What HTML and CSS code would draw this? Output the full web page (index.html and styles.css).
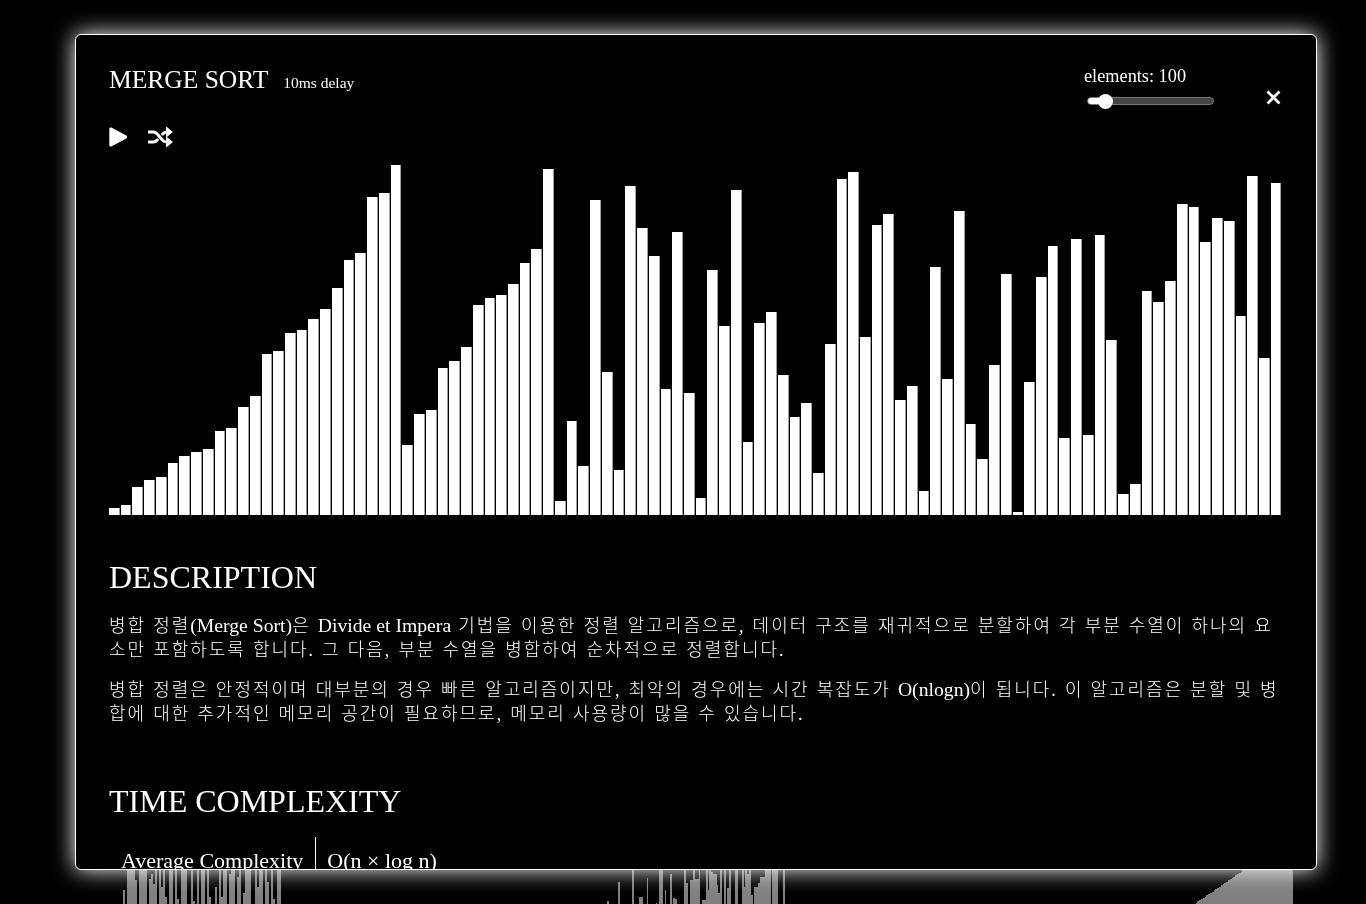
FILE: index.html
```html
<!DOCTYPE html>
<html lang="ko">
<head>
    <meta charset="UTF-8">
    <meta name="viewport" content="width=device-width, initial-scale=1.0">
    <title>Merge Sort</title>
    <link rel="stylesheet" href="styles.css">
</head>

<body>
    <div class="gallery">
        <div class="thumb" id="thumb_bubble"></div>
        <div class="thumb" id="thumb_quick"></div>
        <div class="thumb" id="thumb_sorted"></div>
    </div>

    <div class="modal">
        <div class="modal_head">
            <div class="title_block">
                <h1 class="title">MERGE SORT</h1>
                <span class="delay">10ms delay</span>
            </div>
            <div class="head_right">
                <div class="elements">
                    <label class="elements_label" for="elements_range">elements: 100</label>
                    <input class="elements_range" id="elements_range" type="range" min="10" max="1000" value="100">
                </div>
                <button class="icon_btn close_btn" aria-label="close">
                    <svg width="15" height="15" viewBox="0 0 15 15"><path d="M1.5 1.5 13.5 13.5M13.5 1.5 1.5 13.5" fill="none" stroke="#fff" stroke-width="2.8"/></svg>
                </button>
            </div>
        </div>

        <div class="controls">
            <button class="icon_btn" aria-label="play">
                <svg width="19" height="22" viewBox="0 0 19 22"><path d="M2 2.2 17 10.2Q18 11 17 11.8L2 19.8Q1 20.2 1 19V3Q1 1.8 2 2.2Z" fill="#fff" stroke="#fff" stroke-width="1.4" stroke-linejoin="round"/></svg>
            </button>
            <button class="icon_btn" aria-label="shuffle">
                <svg width="25" height="22" viewBox="0 0 25 22"><path d="M1 6H5.5C7.5 6 8.5 7 9.7 8.4L14.3 14C15.5 15.3 16.5 16 18.5 16H20M1 16H5.5C7.2 16 8.2 15.3 9.3 14M14.7 8C15.8 6.7 16.8 6 18.5 6H20" fill="none" stroke="#fff" stroke-width="3" stroke-linecap="round"/><path d="M18.5 1.2 24.3 6 18.5 10.8ZM18.5 11.2 24.3 16 18.5 20.8Z" fill="#fff" stroke="#fff" stroke-linejoin="round"/></svg>
            </button>
        </div>

        <div class="chart" id="chart"></div>

        <h2 class="section_title description_title">DESCRIPTION</h2>
        <p class="text">병합 정렬<span class="latin">(Merge Sort)</span>은 <span class="latin">Divide et Impera</span> 기법을 이용한 정렬 알고리즘으로, 데이터 구조를 재귀적으로 분할하여 각 부분 수열이 하나의 요소만 포함하도록 합니다. 그 다음, 부분 수열을 병합하여 순차적으로 정렬합니다.</p>
        <p class="text">병합 정렬은 안정적이며 대부분의 경우 빠른 알고리즘이지만, 최악의 경우에는 시간 복잡도가 <span class="latin">O(nlogn)</span>이 됩니다. 이 알고리즘은 분할 및 병합에 대한 추가적인 메모리 공간이 필요하므로, 메모리 사용량이 많을 수 있습니다.</p>

        <h2 class="section_title time_title">TIME COMPLEXITY</h2>
        <table class="complexity">
            <tr>
                <td class="complexity_name">Average Complexity</td>
                <td class="complexity_value">O(n × log n)</td>
            </tr>
        </table>
    </div>

    <script src="script.js"></script>
</body>
</html>
```

FILE: styles.css
```css
body{
    background-color: black;
    color: white;
    height: 100vh;
    margin: 0;
    overflow: hidden;
    font-family: "Liberation Serif", "Noto Sans CJK KR", serif;
}

.gallery{
    display: grid;
    grid-template-columns: repeat(3, 180px);
    gap: 326px;
    padding: 837px 0 0 101px;
}

.thumb{
    display: flex;
    align-items: flex-end;
    height: 124px;
}

.thumb_bar{
    flex: 1;
    background-color: rgb(128, 128, 128);
}

.modal{
    position: fixed;
    top: 34px;
    left: 75px;
    width: 1242px;
    height: 836px;
    box-sizing: border-box;
    padding: 0 35px 0 33px;
    background-color: black;
    border: 1px solid white;
    border-radius: 6px;
    box-shadow: 0 0 22px white;
    overflow: hidden;
}

.modal_head{
    display: flex;
    justify-content: space-between;
    height: 91px;
}

.title_block{
    display: flex;
    align-items: baseline;
    gap: 15px;
    padding-top: 30px;
}

.title{
    margin: 0;
    font-size: 25.5px;
    font-weight: normal;
}

.delay{
    font-size: 15.5px;
}

.head_right{
    display: flex;
    align-items: flex-start;
    gap: 52px;
}

.elements{
    display: flex;
    flex-direction: column;
    padding-top: 31px;
}

.elements_label{
    font-size: 18.3px;
    line-height: 21px;
}

.elements_range{
    appearance: none;
    width: 127px;
    height: 8px;
    margin: 10px 0 0 3px;
    box-sizing: border-box;
    background: linear-gradient(to right, white 18px, rgb(68, 68, 68) 18px);
    border: 1px solid rgb(120, 120, 120);
    border-radius: 4px;
}

.elements_range::-webkit-slider-thumb{
    appearance: none;
    width: 15px;
    height: 15px;
    border-radius: 50%;
    background-color: white;
}

.icon_btn{
    display: block;
    padding: 0;
    border: 0;
    background: none;
    cursor: pointer;
}

.close_btn{
    margin-top: 55px;
    height: 15px;
}

.controls{
    display: flex;
    align-items: flex-start;
    gap: 20px;
    height: 39px;
}

.chart{
    display: flex;
    align-items: flex-end;
    gap: 1px;
    height: 350px;
}

.chart_bar{
    flex: 1;
    box-sizing: border-box;
    background-color: white;
    border-right: 1px solid rgb(160, 160, 160);
}

.section_title{
    margin: 0;
    font-size: 32px;
    font-weight: normal;
    line-height: 37px;
}

.description_title{
    margin-top: 44px;
    margin-bottom: 18px;
}

.time_title{
    margin-top: 57px;
}

.text{
    margin: 0 0 16px 0;
    font-size: 18px;
    font-weight: 300;
    line-height: 24px;
    letter-spacing: 1.98px;
    word-spacing: 0.6px;
}

.latin{
    font-size: 19.7px;
    line-height: 1;
    letter-spacing: 0;
    word-spacing: 0;
}

.complexity{
    margin-top: 17px;
    border-collapse: collapse;
    font-size: 22px;
}

.complexity td{
    padding: 11px 12px;
}

.complexity_name{
    border-right: 1px solid white;
}

.complexity .complexity_value{
    padding-left: 11px;
}
```

FILE: script.js
```js
// values are the bar heights in percent, as the sort left them
const merge_values = [
    2,3,8,10,11,15,17,18,19,24,25,31,34,46,47,52,53,56,59,65,73,75,91,92,100,
    20,29,30,42,44,48,60,62,63,66,72,76,99,
    4,27,14,90,41,13,94,82,74,36,81,35,5,
    70,54,93,21,55,58,40,28,32,12,49,96,98,51,83,86,33,37,7,71,39,87,26,16,43,
    69,1,38,68,77,22,79,23,80,50,6,9,64,61,67,89,88,78,85,84,57,97,45,95
];

const bubble_values = [
    12,30,25,18,35,22,40,15,28,33,20,
    57,30,75,80,74,78,65,40,85,90,78,88,30,66,70,62,85,30,90,60,
    88,52,35,80,76,40,95,50,30,84,78,90,40,35,80,48,30,92,40,75,
    88,35,78,52,30,30,60,30,90,52,84,78,30,70,85,90,40,68,76,30,
    55,88,92,74,30,30,82,60,75,90,30,88,64,30,80,50,30,86,74
];

const quick_values = [
    48,20,30,25,15,35,64,22,30,18,25,35,28,40,90,30,22,18,52,52,
    30,25,67,35,20,30,28,47,30,80,85,30,57,35,30,70,30,51,50,40,
    35,30,30,90,63,30,65,65,85,66,66,90,30,49,49,90,57,80,72,70,
    70,61,55,85,35,88,35,59,90,30,30,85,80,30,30,80,60,85,70,80,
    53,30,60,60,63,68,68,68,85,80,85,30,82,85,80,30,30,30,85,30
];

const sorted_values = [];
for (let i = 1; i <= 100; i++) {
    sorted_values.push(i);
}

function draw_bars(id, values, class_name) {
    const holder = document.getElementById(id);
    values.forEach(function(value) {
        const bar = document.createElement('div');
        bar.className = class_name;
        bar.style.height = value + '%';
        holder.appendChild(bar);
    });
}

draw_bars('chart', merge_values, 'chart_bar');
draw_bars('thumb_bubble', bubble_values, 'thumb_bar');
draw_bars('thumb_quick', quick_values, 'thumb_bar');
draw_bars('thumb_sorted', sorted_values, 'thumb_bar');
```
